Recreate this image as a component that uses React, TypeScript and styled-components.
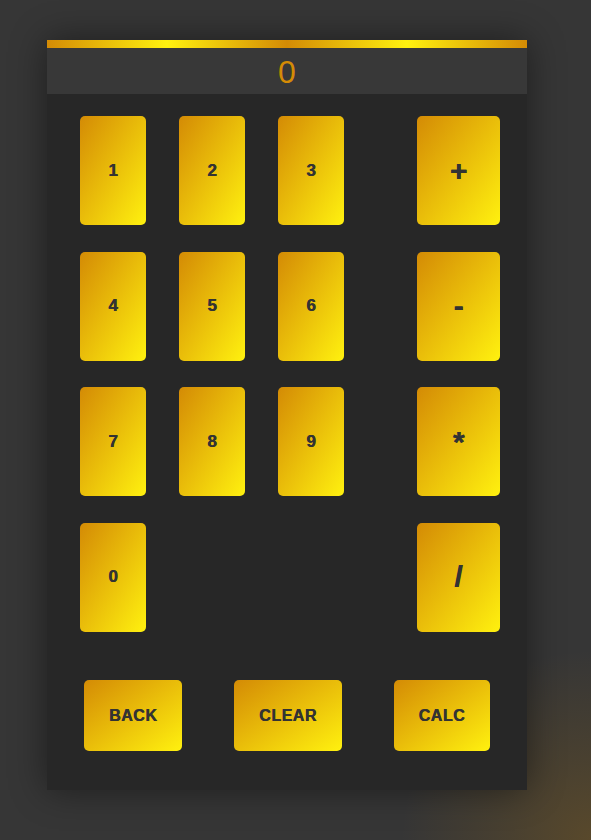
import React from "react";
import styled, { createGlobalStyle } from "styled-components";

const Global = createGlobalStyle`
  html, body { margin: 0; padding: 0; height: 100%; }
  body {
    min-height: 840px;
    background:
      radial-gradient(circle at 100% 100%, rgba(212,139,5,0.22) 0, rgba(212,139,5,0.12) 80px, rgba(212,139,5,0) 190px),
      #363636;
    font-family: "Liberation Sans", Arial, sans-serif;
  }
`;

const Page = styled.div`
  padding: 40px 0 0 47px;
`;

const Panel = styled.div`
  width: 480px;
  background: #272727;
  box-shadow: 0 0 34px rgba(0, 0, 0, 0.45);
  padding-bottom: 39px;
`;

const TopBar = styled.div`
  height: 8px;
  background: linear-gradient(90deg, #d48b05 0%, #fff10f 25%, #d48b05 50%, #fff10f 75%, #d48b05 100%);
`;

const Display = styled.div`
  height: 46px;
  background: #383838;
  display: flex;
  align-items: center;
  justify-content: center;
  color: #d48b05;
  font-size: 32px;
  line-height: 1;
  padding-top: 2px;
  box-sizing: border-box;
`;

const Keypad = styled.div`
  display: grid;
  grid-template-columns: repeat(3, 66px) 123px;
  grid-template-rows: repeat(4, 109px);
  column-gap: 33px;
  row-gap: 26.67px;
  padding: 22px 0 0 33px;
`;

const Key = styled.button<{ $op?: boolean; $col: number; $row: number }>`
  grid-column: ${(p) => p.$col};
  grid-row: ${(p) => p.$row};
  justify-self: end;
  width: ${(p) => (p.$op ? "83px" : "66px")};
  height: 100%;
  border: none;
  border-radius: 5px;
  background: linear-gradient(to bottom right, #d48b05, #fff10f);
  color: #333;
  font-family: "Liberation Sans", Arial, sans-serif;
  font-weight: bold;
  font-size: ${(p) => (p.$op ? "30px" : "17px")};
  text-shadow: 0.5px 0 0 #333;
  padding: 0;
  display: flex;
  align-items: center;
  justify-content: center;
`;

const Actions = styled.div`
  display: flex;
  justify-content: space-between;
  padding: 0 37px;
  margin-top: 48px;
`;

const Action = styled.button`
  height: 71px;
  padding: 2px 25px 0;
  border: none;
  border-radius: 5px;
  background: linear-gradient(to bottom right, #d48b05, #fff10f);
  color: #333;
  font-family: "Liberation Sans", Arial, sans-serif;
  font-weight: bold;
  font-size: 16px;
  letter-spacing: 0.5px;
  text-shadow: 0.5px 0 0 #333;
`;

const digits = [
  { l: "1", c: 1, r: 1 },
  { l: "2", c: 2, r: 1 },
  { l: "3", c: 3, r: 1 },
  { l: "4", c: 1, r: 2 },
  { l: "5", c: 2, r: 2 },
  { l: "6", c: 3, r: 2 },
  { l: "7", c: 1, r: 3 },
  { l: "8", c: 2, r: 3 },
  { l: "9", c: 3, r: 3 },
  { l: "0", c: 1, r: 4 },
];

const ops = ["+", "-", "*", "/"];

export default function App() {
  return (
    <>
      <Global />
      <Page>
        <Panel>
          <TopBar />
          <Display>0</Display>
          <Keypad>
            {digits.map((d) => (
              <Key key={d.l} $col={d.c} $row={d.r}>
                {d.l}
              </Key>
            ))}
            {ops.map((o, i) => (
              <Key key={o} $op $col={4} $row={i + 1}>
                {o}
              </Key>
            ))}
          </Keypad>
          <Actions>
            <Action>BACK</Action>
            <Action>CLEAR</Action>
            <Action>CALC</Action>
          </Actions>
        </Panel>
      </Page>
    </>
  );
}
